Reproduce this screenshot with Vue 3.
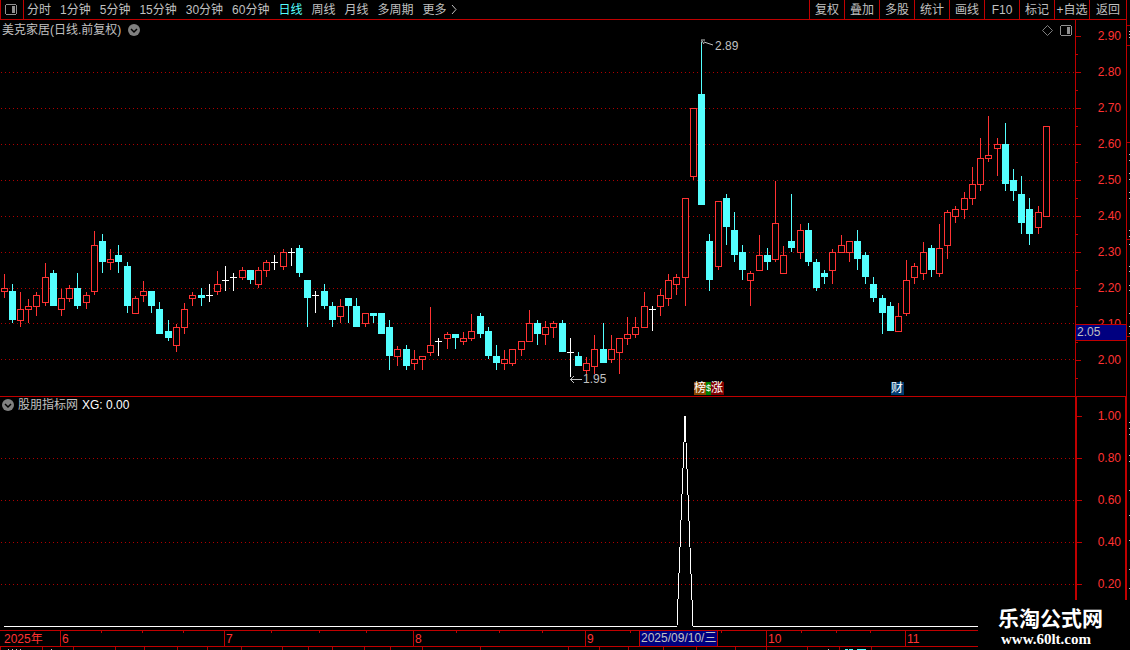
<template>
  <div class="terminal">
    <div class="workspace">
      <main class="main">
        <nav class="toolbar">
          <button class="layout-button" aria-label="布局">
            <svg width="12" height="11" viewBox="0 0 12 11" shape-rendering="crispEdges">
              <path fill="#909090" d="M1 0h10v1h1v9h-1v1H1v-1H0V1h1zM1 1v9h10V1z" fill-rule="evenodd" />
              <rect x="7" y="2" width="3" height="7" fill="#909090" />
            </svg>
          </button>
          <div class="periods">
            <button
              v-for="period in periods"
              :key="period"
              :class="['period', { active: activePeriod === period }]"
              @click="activePeriod = period"
            >
              {{ period }}
            </button>
            <button class="period more">
              更多
              <svg width="6" height="9" viewBox="0 0 6 9">
                <path d="M1 0L5 4.500L1 9" fill="none" stroke="#c0c0c0" />
              </svg>
            </button>
          </div>
          <div class="tools">
            <button v-for="tool in tools" :key="tool" class="tool">{{ tool }}</button>
          </div>
        </nav>

        <!-- K线 -->
        <section class="panel price-panel">
          <div class="plot">
            <svg
              class="canvas"
              viewBox="0 0 1075 376"
              preserveAspectRatio="none"
              shape-rendering="crispEdges"
            >
              <defs>
                <pattern id="dots" width="4" height="1" patternUnits="userSpaceOnUse">
                  <rect x="1" width="1" height="1" fill="#b00000" />
                </pattern>
              </defs>
              <rect
                v-for="y in priceGrid"
                :key="y"
                x="0"
                :y="y - 20"
                width="1075"
                height="1"
                fill="url(#dots)"
              />
              <g v-for="c in candles" :key="c.x" :class="c.type" transform="translate(0 -20)">
                <rect :x="c.x" :y="c.high" width="1" :height="c.low - c.high" />
                <rect :x="c.x - 3" :y="c.top" width="7" :height="c.bottom - c.top" />
                <rect
                  v-if="c.type === 'up'"
                  class="hollow"
                  :x="c.x - 2"
                  :y="c.top + 1"
                  width="5"
                  :height="c.bottom - c.top - 2"
                />
              </g>
            </svg>
            <header class="panel-head">
              <h1 class="panel-title">美克家居(日线.前复权)</h1>
              <button class="fold" aria-label="展开">
                <svg width="12" height="12" viewBox="0 0 12 12">
                  <circle cx="6" cy="6" r="6" fill="#808080" />
                  <path d="M3 5l3 3l3-3" fill="none" stroke="#000" stroke-width="1.500" />
                </svg>
              </button>
              <div class="head-tools">
                <button class="fold" aria-label="标记">
                  <svg width="11" height="11" viewBox="0 0 11 11">
                    <path d="M5.500 0.500l5 5l-5 5l-5-5z" fill="none" stroke="#808080" />
                  </svg>
                </button>
                <button class="fold" aria-label="侧栏">
                  <svg width="12" height="11" viewBox="0 0 12 11" shape-rendering="crispEdges">
                    <path fill="#909090" d="M1 0h10v1h1v9h-1v1H1v-1H0V1h1zM1 1v9h10V1z" fill-rule="evenodd" />
                    <rect x="7" y="2" width="3" height="7" fill="#909090" />
                  </svg>
                </button>
              </div>
            </header>
            <div class="mark" :style="{ left: percent(701), top: '19px' }">
              <svg width="12" height="8" viewBox="0 0 12 8">
                <path d="M0 6V1M0 1h4M1 2l2 3M3 3l9 3" fill="none" stroke="#c0c0c0" />
              </svg>
              <span>2.89</span>
            </div>
            <div class="mark low" :style="{ left: percent(570), top: '352px' }">
              <svg width="12" height="7" viewBox="0 0 12 7" shape-rendering="crispEdges">
                <path d="M0 3h12v1H0zM1 2h1v1H1zM2 1h1v1H2zM3 0h1v1H3zM1 4h1v1H1zM2 5h1v1H2zM3 6h1v1H3z" fill="#c0c0c0" />
              </svg>
              <span>1.95</span>
            </div>
            <div class="badges" :style="{ left: percent(694) }">
              <span class="badge brown">榜</span>
              <span class="badge green">$</span>
              <span class="badge red">涨</span>
            </div>
            <div class="badges" :style="{ left: percent(891) }">
              <span class="badge navy">财</span>
            </div>
          </div>
          <ol class="scale">
            <li v-for="price in prices" :key="price">{{ price }}</li>
            <li class="cursor-price">2.05</li>
          </ol>
        </section>

        <!-- 指标 -->
        <section class="panel signal-panel">
          <div class="plot">
            <svg
              class="canvas"
              viewBox="0 0 1075 233"
              preserveAspectRatio="none"
              shape-rendering="crispEdges"
            >
              <rect
                v-for="y in signalGrid"
                :key="y"
                x="0"
                :y="y - 397"
                width="1075"
                height="1"
                fill="url(#dots)"
              />
              <path d="M4 229H677L685 19L693 229H1075" fill="none" stroke="#fff" />
            </svg>
            <header class="panel-head signal-head">
              <button class="fold" aria-label="展开">
                <svg width="12" height="12" viewBox="0 0 12 12">
                  <circle cx="6" cy="6" r="6" fill="#808080" />
                  <path d="M3 5l3 3l3-3" fill="none" stroke="#000" stroke-width="1.500" />
                </svg>
              </button>
              <h2 class="panel-title">股朋指标网</h2>
              <span class="value">XG: 0.00</span>
            </header>
          </div>
          <ol class="scale">
            <li v-for="level in levels" :key="level">{{ level }}</li>
          </ol>
        </section>
      </main>
      <aside class="edge">
        <svg width="3" height="630" viewBox="0 0 3 630" shape-rendering="crispEdges">
          <rect v-for="y in edgeLines" :key="y" :y="y" width="3" height="1" fill="#b00000" />
          <rect v-for="y in edgeBits" :key="y" x="2" :y="y" width="1" height="1" fill="#c0c0c0" />
        </svg>
      </aside>
    </div>

    <div class="timeline">
      <div v-for="month in months" :key="month" class="month">
        <span>{{ month }}</span>
        <i></i><i></i><i></i>
      </div>
      <time class="cursor-date" datetime="2025-09-10">2025/09/10/三</time>
    </div>
    <svg
      class="footer"
      viewBox="0 0 1130 3"
      preserveAspectRatio="none"
      shape-rendering="crispEdges"
    >
      <rect v-for="x in footerTicks" :key="x" :x="x" width="1" height="3" fill="#b00000" />
      <path d="M8 2h1v1H8zM12 2h1v1h-1zM16 2h1v1h-1zM20 2h1v1h-1zM51 2h1v1h-1zM828 2h1v1h-1z" fill="#c0c0c0" />
      <path d="M845 2h3v1h-3zM849 2h4v1h-4zM857 2h9v1h-9z" fill="#54ffff" />
    </svg>

    <div class="watermark">
      <strong>乐淘公式网</strong>
      <a href="#">www.60lt.com</a>
    </div>
  </div>
</template>

<script setup>
import { ref } from "vue";

const periods = ["分时", "1分钟", "5分钟", "15分钟", "30分钟", "60分钟", "日线", "周线", "月线", "多周期"];
const activePeriod = ref("日线");
const tools = ["复权", "叠加", "多股", "统计", "画线", "F10", "标记", "+自选", "返回"];

const prices = ["2.90", "2.80", "2.70", "2.60", "2.50", "2.40", "2.30", "2.20", "2.10", "2.00"];
const levels = ["1.00", "0.80", "0.60", "0.40", "0.20"];
const months = ["2025年", "6", "7", "8", "9", "10", "11"];

const priceGrid = [72, 108, 144, 180, 216, 252, 288, 323, 359];
const signalGrid = [458, 500, 542, 584];
const edgeLines = [25, 45, 142, 239, 336];
const edgeBits = [
  31, 34, 37, 154, 160, 173, 179, 192, 198, 230, 236, 244, 266, 271, 285, 290, 313, 326, 333, 422,
  428, 434, 455, 461, 490, 515, 540, 569, 588,
];
const footerTicks = [
  0, 42, 73, 115, 144, 177, 207, 241, 282, 308, 332, 364, 390, 422, 480, 568, 599, 628, 663, 696,
  735, 766, 807, 839, 871,
];

const percent = (x) => `${(x / 1075) * 100}%`;

// [类型, x, 最高, 实体上沿, 实体下沿, 最低]
const candles = [
  ["up", 4, 274, 288, 292, 298],
  ["down", 12, 284, 291, 320, 323],
  ["up", 20, 292, 309, 321, 327],
  ["up", 28, 299, 306, 310, 323],
  ["up", 36, 292, 295, 307, 316],
  ["up", 45, 263, 277, 303, 306],
  ["down", 53, 270, 273, 306, 306],
  ["up", 61, 289, 298, 310, 316],
  ["up", 69, 285, 288, 299, 302],
  ["down", 77, 273, 288, 306, 309],
  ["up", 86, 292, 295, 303, 309],
  ["up", 94, 231, 245, 292, 295],
  ["down", 102, 234, 241, 262, 273],
  ["up", 110, 249, 259, 263, 270],
  ["down", 118, 245, 255, 262, 273],
  ["down", 127, 262, 266, 306, 313],
  ["up", 135, 296, 298, 314, 314],
  ["up", 143, 281, 291, 296, 302],
  ["down", 151, 291, 291, 306, 313],
  ["down", 159, 302, 309, 334, 334],
  ["down", 168, 320, 331, 338, 341],
  ["up", 176, 324, 327, 346, 352],
  ["up", 184, 303, 309, 328, 334],
  ["up", 192, 292, 295, 299, 306],
  ["down", 201, 288, 295, 298, 306],
  ["flat", 209, 284, 295, 296, 302],
  ["up", 217, 271, 284, 292, 295],
  ["flat", 225, 266, 280, 281, 291],
  ["flat", 233, 273, 277, 278, 291],
  ["up", 242, 267, 270, 278, 280],
  ["down", 250, 270, 270, 280, 284],
  ["up", 258, 267, 270, 285, 288],
  ["up", 266, 260, 262, 271, 277],
  ["flat", 274, 255, 262, 263, 270],
  ["up", 283, 249, 252, 267, 270],
  ["flat", 291, 248, 252, 253, 266],
  ["down", 299, 245, 248, 273, 277],
  ["down", 307, 280, 280, 298, 327],
  ["flat", 315, 291, 295, 296, 313],
  ["down", 324, 284, 291, 306, 309],
  ["down", 332, 302, 306, 320, 327],
  ["up", 340, 299, 306, 317, 323],
  ["down", 348, 298, 298, 306, 323],
  ["down", 356, 298, 306, 327, 327],
  ["up", 365, 313, 313, 324, 327],
  ["down", 373, 313, 313, 316, 323],
  ["down", 381, 313, 313, 334, 334],
  ["down", 389, 320, 327, 356, 370],
  ["up", 397, 346, 349, 357, 366],
  ["down", 406, 345, 349, 366, 370],
  ["up", 414, 350, 359, 364, 370],
  ["up", 422, 356, 356, 360, 370],
  ["up", 430, 307, 345, 353, 356],
  ["flat", 438, 338, 341, 342, 356],
  ["up", 447, 332, 334, 339, 349],
  ["down", 455, 334, 334, 338, 349],
  ["up", 463, 332, 338, 342, 345],
  ["up", 471, 314, 331, 339, 341],
  ["down", 480, 313, 316, 334, 338],
  ["down", 488, 327, 331, 356, 359],
  ["down", 496, 345, 356, 363, 370],
  ["up", 504, 350, 359, 364, 370],
  ["up", 512, 349, 349, 364, 366],
  ["up", 521, 341, 341, 350, 356],
  ["up", 529, 310, 323, 342, 342],
  ["down", 537, 320, 323, 334, 345],
  ["up", 545, 321, 327, 335, 345],
  ["up", 553, 321, 323, 328, 338],
  ["down", 562, 320, 323, 352, 352],
  ["flat", 570, 338, 352, 353, 377],
  ["down", 578, 352, 356, 366, 366],
  ["up", 586, 357, 363, 371, 374],
  ["up", 594, 335, 349, 367, 374],
  ["down", 603, 323, 349, 363, 363],
  ["up", 611, 335, 349, 360, 363],
  ["up", 619, 338, 338, 353, 374],
  ["up", 627, 317, 334, 339, 345],
  ["up", 635, 317, 327, 335, 338],
  ["up", 644, 292, 306, 328, 328],
  ["flat", 652, 306, 309, 310, 331],
  ["up", 660, 289, 295, 307, 316],
  ["up", 668, 274, 280, 299, 306],
  ["up", 676, 274, 277, 285, 295],
  ["up", 685, 198, 198, 278, 306],
  ["up", 693, 108, 108, 177, 180],
  ["down", 701, 42, 94, 205, 205],
  ["down", 709, 234, 241, 280, 291],
  ["up", 718, 201, 201, 267, 270],
  ["down", 726, 194, 198, 227, 245],
  ["down", 734, 212, 230, 255, 262],
  ["down", 742, 245, 252, 270, 280],
  ["up", 750, 271, 273, 281, 306],
  ["up", 759, 235, 255, 271, 271],
  ["down", 767, 248, 255, 262, 270],
  ["up", 775, 181, 223, 260, 262],
  ["up", 783, 246, 255, 274, 274],
  ["down", 791, 194, 241, 248, 252],
  ["up", 800, 224, 230, 253, 259],
  ["down", 808, 223, 230, 262, 266],
  ["down", 816, 259, 262, 288, 291],
  ["down", 824, 270, 273, 277, 284],
  ["up", 832, 249, 252, 271, 284],
  ["up", 841, 235, 245, 253, 253],
  ["up", 849, 241, 241, 253, 262],
  ["down", 857, 230, 241, 259, 270],
  ["down", 865, 252, 255, 277, 284],
  ["down", 873, 277, 284, 298, 302],
  ["down", 882, 295, 298, 313, 334],
  ["down", 890, 302, 306, 331, 331],
  ["up", 898, 303, 316, 332, 332],
  ["up", 906, 260, 280, 314, 316],
  ["up", 914, 263, 266, 278, 284],
  ["up", 923, 242, 252, 274, 280],
  ["down", 931, 245, 248, 270, 277],
  ["up", 939, 224, 248, 274, 277],
  ["up", 947, 210, 212, 246, 259],
  ["up", 955, 206, 209, 217, 223],
  ["up", 964, 192, 198, 210, 219],
  ["up", 972, 167, 184, 199, 205],
  ["up", 980, 138, 158, 185, 191],
  ["up", 988, 116, 155, 159, 162],
  ["up", 997, 138, 144, 149, 176],
  ["down", 1005, 123, 144, 184, 191],
  ["down", 1013, 169, 180, 191, 201],
  ["down", 1021, 176, 194, 223, 234],
  ["down", 1029, 198, 209, 234, 245],
  ["up", 1038, 206, 212, 228, 234],
  ["up", 1046, 126, 126, 217, 217],
].map(([type, x, high, top, bottom, low]) => ({ type, x, high, top, bottom, low }));
</script>

<style>
body {
  margin: 0;
  background-color: #000000;
}
</style>

<style scoped>
.terminal {
  position: relative;
  overflow: hidden;
  background-color: #000000;
  color: #c0c0c0;
  font-family: "Liberation Sans", "Noto Sans CJK SC", sans-serif;
  font-size: 12px;
  line-height: 18px;
}

button {
  background: none;
  border: none;
  padding: 0;
  color: inherit;
  font: inherit;
  white-space: nowrap;
  cursor: pointer;
}

svg {
  display: block;
}

.workspace {
  display: flex;
}

.main {
  flex: 1;
  min-width: 0;
}

.toolbar {
  display: flex;
  height: 19px;
  border-bottom: 1px solid #c00000;
  border-right: 1px solid #c00000;
}

.layout-button {
  display: flex;
  align-items: center;
  padding-left: 4px;
  box-sizing: border-box;
  width: 24px;
  border-left: 1px solid #c00000;
  border-right: 1px solid #c00000;
}

.periods {
  display: flex;
  flex: 1;
  gap: 9px;
  padding-left: 3px;
}

.period.active {
  color: #54ffff;
}

.more {
  display: flex;
  align-items: center;
  gap: 4px;
}

.tools {
  display: flex;
}

.tool {
  box-sizing: border-box;
  width: 35px;
  border-left: 1px solid #c00000;
}

.tool:last-child {
  width: 37px;
}

.panel {
  display: grid;
  grid-template-columns: 1fr 52px;
  border-bottom: 1px solid #c00000;
}

.plot {
  position: relative;
}

.canvas {
  width: 100%;
}

.price-panel .canvas {
  height: 376px;
}

.signal-panel .canvas {
  height: 233px;
}

.up {
  fill: #ff3232;
}

.down {
  fill: #54ffff;
}

.flat {
  fill: #ffffff;
}

.hollow {
  fill: #000000;
}

.panel-head {
  position: absolute;
  top: 0;
  left: 0;
  right: 0;
  display: flex;
  align-items: center;
  gap: 7px;
  padding: 0 3px 0 2px;
  line-height: 20px;
}

.signal-head {
  gap: 4px;
  line-height: 16px;
}

.panel-title {
  margin: 0;
  font-size: 12px;
  font-weight: normal;
}

.value {
  color: #ffffff;
}

.head-tools {
  display: flex;
  gap: 7px;
  margin-left: auto;
}

.mark {
  position: absolute;
  display: flex;
  gap: 2px;
  line-height: 14px;
}

.mark.low {
  gap: 1px;
  align-items: center;
}

.badges {
  position: absolute;
  bottom: 1px;
  display: flex;
}

.badge {
  width: 13px;
  color: #ffffff;
  line-height: 13px;
}

.badge.brown {
  width: 12px;
  background-color: #8a4500;
}

.badge.green {
  width: 5px;
  background-color: #008000;
  font-size: 9px;
}

.badge.red {
  background-color: #800000;
}

.badge.navy {
  background-color: #003c70;
}

.scale {
  position: relative;
  margin: 0;
  padding: 0;
  list-style: none;
  overflow: hidden;
  color: #ff3232;
  text-align: right;
  border-left: 1px solid #c00000;
  border-right: 1px solid #c00000;
}

.scale li {
  position: relative;
  padding-right: 5px;
  line-height: 36px;
}

.scale li:first-child {
  margin-top: -2px;
}

.scale li::before,
.scale li::after {
  content: "";
  position: absolute;
  left: 0;
  top: 50%;
  width: 5px;
  height: 1px;
  background-color: #c00000;
}

.scale li::after {
  top: 100%;
  width: 2px;
}

.signal-panel .scale {
  border-left-width: 2px;
  border-right-width: 2px;
}

.signal-panel .scale li {
  padding-right: 4px;
  line-height: 42px;
}

.signal-panel .scale li::after {
  display: none;
}

.scale .cursor-price {
  position: absolute;
  top: 304px;
  left: 0;
  right: 0;
  background-color: #000080;
  border-top: 1px solid #c00000;
  border-bottom: 1px solid #c00000;
  color: #c0c0c0;
  line-height: 15px;
  text-align: left;
  padding-left: 1px;
}

.scale .cursor-price::before,
.scale .cursor-price::after {
  display: none;
}

.edge {
  width: 3px;
}

.timeline {
  position: relative;
  display: grid;
  grid-template-columns: 60fr 164fr 189fr 172fr 181fr 139fr 225fr;
  border-bottom: 1px solid #c00000;
  color: #ff3232;
  line-height: 17px;
}

.month {
  position: relative;
  display: flex;
  justify-content: space-evenly;
  height: 15px;
  border-left: 1px solid #c00000;
}

.month:first-child {
  border-left: none;
}

.month span {
  position: absolute;
  left: 1px;
}

.month:first-child span {
  left: 4px;
}

.month i {
  width: 1px;
  height: 2px;
  background-color: #c00000;
}

.month:first-child i,
.month:last-of-type i {
  visibility: hidden;
}

.cursor-date {
  position: absolute;
  left: 56.55%;
  top: 0;
  padding: 0 1px;
  background-color: #000080;
  border-left: 1px solid #c00000;
  border-right: 1px solid #c00000;
  color: #c0c0c0;
  line-height: 15px;
}

.footer {
  width: 100%;
  height: 3px;
}

.watermark {
  position: absolute;
  right: 0;
  bottom: 0;
  display: flex;
  flex-direction: column;
  box-sizing: border-box;
  width: 152px;
  height: 50px;
  padding: 7px 0 0 20px;
  background-color: #000000;
  color: #ffffff;
}

.watermark strong {
  font-size: 21px;
  line-height: 24px;
}

.watermark a {
  padding-left: 3px;
  color: #ffffff;
  font-family: "Liberation Serif", serif;
  font-size: 15px;
  font-weight: bold;
  line-height: 16px;
  text-decoration: none;
}
</style>
